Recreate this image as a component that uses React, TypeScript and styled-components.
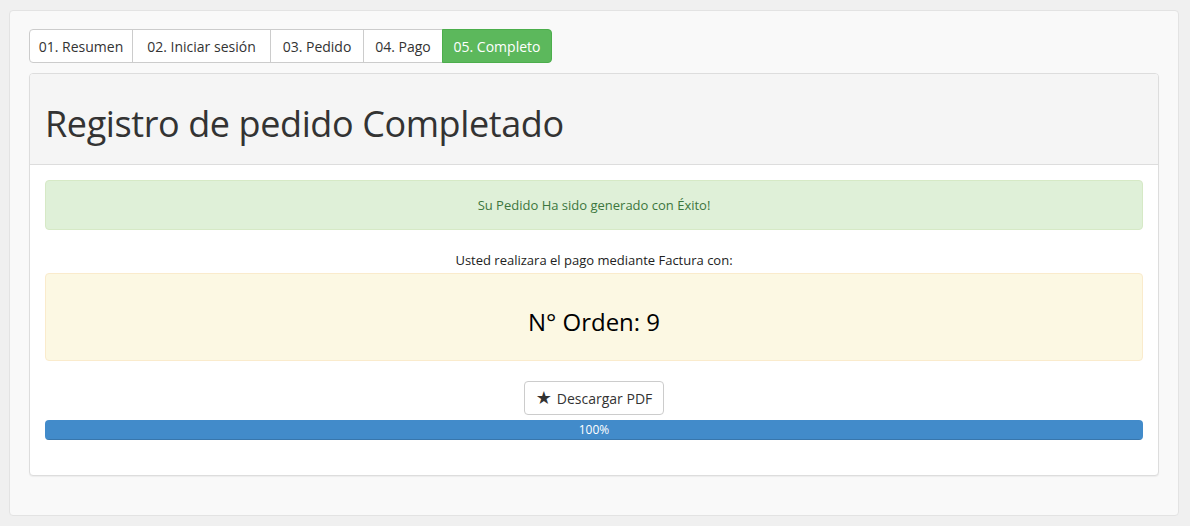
import React from "react";
import styled, { createGlobalStyle } from "styled-components";

const Global = createGlobalStyle`
  html, body { margin: 0; padding: 0; background: #f0f0f0; }
  body { font-family: "Open Sans", "DejaVu Sans", sans-serif; font-size: 14px; color: #333; }
  * { box-sizing: border-box; }
`;

const Page = styled.div`
  padding: 10px 11px 10px 9px;
`;

const Well = styled.div`
  background: #f9f9f9;
  border: 1px solid #e3e3e3;
  border-radius: 4px;
  padding: 18px 19px 19px 19px;
`;

const Tabs = styled.div`
  display: flex;
  margin-bottom: 10px;
`;

const Tab = styled.div<{ $active?: boolean; $w: number }>`
  width: ${(p) => p.$w}px;
  height: 34px;
  display: flex;
  align-items: center;
  justify-content: center;
  font-size: 14px;
  white-space: nowrap;
  background: ${(p) => (p.$active ? "#5cb85c" : "#fff")};
  color: ${(p) => (p.$active ? "#fff" : "#333")};
  border: 1px solid ${(p) => (p.$active ? "#4cae4c" : "#ccc")};
  margin-left: -1px;
  &:first-child { margin-left: 0; border-radius: 4px 0 0 4px; }
  &:last-child { border-radius: 0 4px 4px 0; }
`;

const Panel = styled.div`
  background: #fff;
  border: 1px solid #ddd;
  border-radius: 4px;
  box-shadow: 0 1px 1px rgba(0,0,0,.05);
  margin-bottom: 20px;
`;

const PanelHeading = styled.div`
  background: #f5f5f5;
  border-bottom: 1px solid #ddd;
  border-radius: 3px 3px 0 0;
  padding: 10px 15px;
`;

const Title = styled.h1`
  margin: 20px 0 10px;
  font-size: 36px;
  line-height: 39.6px;
  font-weight: 500;
  color: #333;
  letter-spacing: -0.4px;
`;

const PanelBody = styled.div`
  padding: 15px;
`;

const Alert = styled.div<{ $kind: "success" | "warning" }>`
  border: 1px solid ${(p) => (p.$kind === "success" ? "#d6e9c6" : "#faebcc")};
  background: ${(p) => (p.$kind === "success" ? "#dff0d8" : "#fcf8e3")};
  color: ${(p) => (p.$kind === "success" ? "#3c763d" : "#000")};
  border-radius: 4px;
  padding: ${(p) => (p.$kind === "success" ? "14px 15px" : "15px")};
  margin-bottom: 20px;
  text-align: center;
  font-size: 13px;
  line-height: 20px;
`;

const Note = styled.p`
  margin: 0 0 3px;
  text-align: center;
  font-size: 13px;
  line-height: 20px;
  color: #222;
`;

const OrderNumber = styled.h3`
  margin: 20px 0 10px;
  font-size: 24px;
  line-height: 26.4px;
  font-weight: 500;
  color: #000;
`;

const Center = styled.div`
  display: flex;
  justify-content: center;
  margin-bottom: 5px;
`;

const Button = styled.button`
  font-family: inherit;
  font-size: 14px;
  color: #333;
  background: #fff;
  border: 1px solid #ccc;
  border-radius: 4px;
  height: 34px;
  width: 140px;
  padding: 0 8px;
  white-space: nowrap;
  display: flex;
  align-items: center;
  justify-content: center;
  gap: 5px;
`;

const Star = styled.span`
  font-family: "DejaVu Sans", sans-serif;
  font-size: 18px;
  line-height: 1;
  color: #333;
`;

const Progress = styled.div`
  height: 20px;
  background: #f5f5f5;
  border-radius: 4px;
  overflow: hidden;
  margin-bottom: 20px;
  display: flex;
`;

const Bar = styled.div`
  background: #428bca;
  color: #fff;
  font-size: 12px;
  line-height: 20px;
  text-align: center;
  box-shadow: inset 0 -1px 0 rgba(0,0,0,.15);
`;

const tabs = [
  { label: "01. Resumen", w: 104 },
  { label: "02. Iniciar sesión", w: 139 },
  { label: "03. Pedido", w: 94 },
  { label: "04. Pago", w: 80 },
  { label: "05. Completo", w: 110, active: true },
];

export default function App() {
  const pct = 100;
  return (
    <>
      <Global />
      <Page>
        <Well>
          <Tabs>
            {tabs.map((t) => (
              <Tab key={t.label} $w={t.w} $active={t.active}>
                {t.label}
              </Tab>
            ))}
          </Tabs>
          <Panel>
            <PanelHeading>
              <Title>Registro de pedido Completado</Title>
            </PanelHeading>
            <PanelBody>
              <Alert $kind="success">Su Pedido Ha sido generado con Éxito!</Alert>
              <Note>Usted realizara el pago mediante Factura con:</Note>
              <Alert $kind="warning">
                <OrderNumber>N° Orden: 9</OrderNumber>
              </Alert>
              <Center>
                <Button>
                  <Star>★</Star>
                  Descargar PDF
                </Button>
              </Center>
              <Progress>
                <Bar style={{ width: `${pct}%` }}>{pct}%</Bar>
              </Progress>
            </PanelBody>
          </Panel>
        </Well>
      </Page>
    </>
  );
}
